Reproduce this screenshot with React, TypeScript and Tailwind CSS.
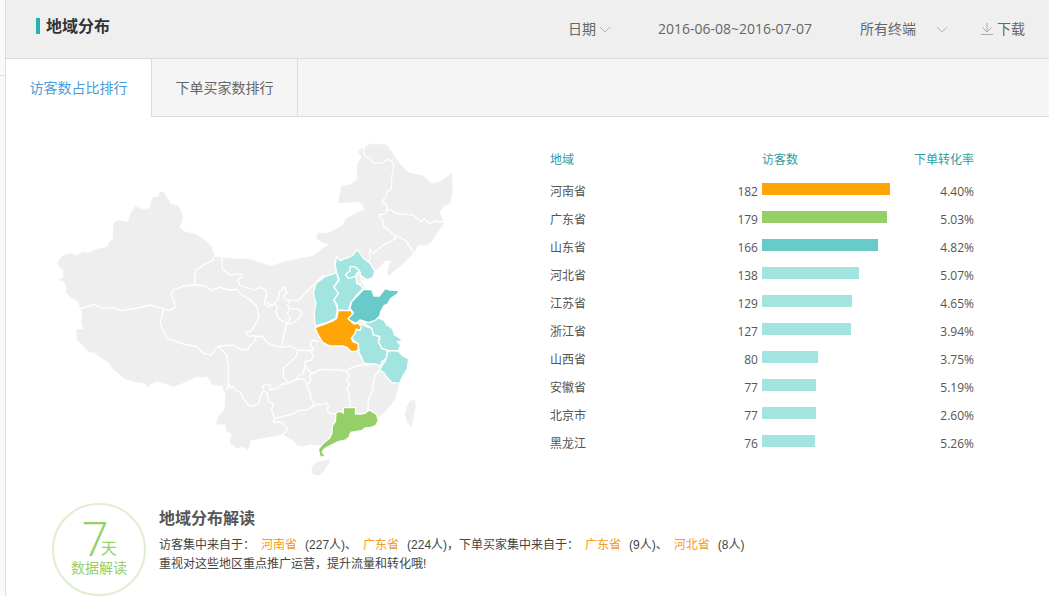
import React from 'react';

interface Region {
  name: string;
  visitors: number;
  rate: string;
  color: string;
}

interface Shape {
  points: string;
  fill: string;
}

const REGIONS: Region[] = [
  { name: '河南省', visitors: 182, rate: '4.40%', color: 'bg-[#ffa508]' },
  { name: '广东省', visitors: 179, rate: '5.03%', color: 'bg-[#94cf68]' },
  { name: '山东省', visitors: 166, rate: '4.82%', color: 'bg-[#68cbca]' },
  { name: '河北省', visitors: 138, rate: '5.07%', color: 'bg-[#a1e4e0]' },
  { name: '江苏省', visitors: 129, rate: '4.65%', color: 'bg-[#a1e4e0]' },
  { name: '浙江省', visitors: 127, rate: '3.94%', color: 'bg-[#a1e4e0]' },
  { name: '山西省', visitors: 80, rate: '3.75%', color: 'bg-[#a1e4e0]' },
  { name: '安徽省', visitors: 77, rate: '5.19%', color: 'bg-[#a1e4e0]' },
  { name: '北京市', visitors: 77, rate: '2.60%', color: 'bg-[#a1e4e0]' },
  { name: '黑龙江', visitors: 76, rate: '5.26%', color: 'bg-[#a1e4e0]' },
];

const MAX_VISITORS = 182;
const MAX_BAR_WIDTH = 128;

const LAND = '#eeeeee';
const TEAL = '#a1e4e0';

const MAINLAND =
  '22,403 30,385 45,374 65,371 80,378 97,367 115,369 140,358 170,352 180,335 190,325 191,278 205,272 235,277 240,255 255,230 278,238 300,236 306,204 325,200 331,186 342,186 348,200 358,212 360,222 385,228 396,248 396,270 388,290 400,304 440,315 470,335 485,352 492,380 520,384 560,387 600,388 630,398 665,410 700,395 740,388 790,378 820,354 840,345 805,330 798,318 805,310 835,310 880,285 890,265 920,250 945,240 935,222 925,215 865,218 875,168 900,165 922,148 922,105 935,80 925,65 945,50 965,42 1010,45 1025,65 1040,90 1075,128 1120,138 1145,163 1180,150 1205,130 1207,180 1200,218 1180,230 1168,245 1180,282 1160,310 1145,335 1130,345 1105,345 1090,370 1060,400 1030,425 1015,437 1012,425 1020,405 1025,390 1005,392 985,415 972,420 972,430 960,445 945,445 935,452 940,465 945,475 965,485 972,500 990,500 1005,480 1043,485 1020,502 1000,525 990,545 978,560 1000,572 1025,595 1037,618 1058,630 1040,635 1050,645 1045,665 1055,678 1072,688 1070,715 1058,735 1048,758 1040,790 1030,815 1005,845 985,860 980,875 965,885 940,895 900,905 898,920 865,935 835,950 805,945 780,942 760,948 740,945 730,930 710,920 695,910 688,916 660,920 620,927 602,930 598,950 592,960 586,954 575,950 560,955 552,945 540,940 545,910 532,905 525,882 500,882 505,860 525,838 527,790 520,780 520,768 485,762 472,738 460,742 440,740 410,754 370,770 345,760 320,755 305,760 293,772 290,760 260,756 225,746 205,730 185,712 180,702 150,680 130,665 118,667 82,630 80,600 100,598 95,575 97,550 85,515 60,500 48,488 50,470 40,452 25,450 40,444 40,420';

// borders of the western, central and southern provinces
const INNER_BORDERS = [
  '74,50 68,62 40,75 15,92 15,135 -20,138 -50,150 -58,162 -48,180 -46,202 -60,212 -85,205 -120,195 -150,202 -205,212 -235,202 -260,205 -290,193 -329,207',
  '15,135 45,138 65,150 90,142 115,150 140,148 150,160 180,180 200,198 207,230 192,260 182,275 168,275 170,285 180,290 190,285 197,290',
  '-80,210 -90,250 -70,295 -20,312 20,320 40,340 65,345 80,322 85,318 95,330 110,345 115,380 115,430 120,440',
  '85,318 130,315 155,330 175,328 178,318 192,308 197,292',
  '95,55 98,88 120,105 155,100 155,112 142,120 150,135 190,150 215,142 230,155 228,172 222,190 235,200 255,190 265,175 268,155 285,140 290,158 280,170 288,180 325,182 345,160 370,135 400,108',
  '222,185 248,195 255,192 262,205 258,215 265,235 280,245 292,250',
  '300,180 292,195 300,205 325,208 335,215 330,232 310,250 290,252 280,290 275,320',
  '300,205 292,220 300,235 298,248',
  '197,290 215,288 235,310 272,322 300,318 325,330 355,332 370,330 360,310 370,300 385,305',
  '325,330 318,350 295,372 280,385 280,410 295,430 315,420 325,408 340,402 345,375 342,365 365,360 370,345 360,333',
  '110,450 115,430 120,445 130,440 138,452 150,455 160,475 175,495 185,498 207,490 212,465 222,452 218,440 232,432 242,438 240,450 262,445 275,432 290,432',
  '222,452 232,460 235,485 250,490 245,510 255,535 275,530 310,522 325,512 350,510 368,500 372,490 360,470 362,460 350,440 352,428 338,416 315,420',
  '255,535 250,548 270,545 290,560 290,575 278,582',
  '368,500 385,492 395,495 410,488 415,498 412,515 425,522 440,520',
  '345,375 358,395 370,400 385,390 400,388 450,390 470,395 480,385 510,375 540,375',
  '370,398 360,405 362,420 358,430 350,432',
  '470,395 478,410 470,425 480,430 472,445 478,465 480,505',
  '575,385 555,405 550,430 548,450 535,480 533,515',
];

// borders in the north east
const NORTHEAST_BORDERS = [
  '345,50 340,65 345,78 360,85 370,100 400,98 415,88 428,95 432,110 425,140 425,175 412,185 408,200 395,215 410,225 412,240 405,252 385,255 398,270 400,290 415,298 425,310 440,318',
  '410,240 425,240 440,250 490,255 515,275 522,265 540,282 555,272 580,277',
  '440,318 465,330 480,350 490,368',
  '440,318 430,330 400,345 375,365 370,370 360,360 358,372 360,385 356,395',
];

const NORTH_CHINA: Shape[] = [
  { fill: TEAL, points: '440,98 405,110 378,130 370,160 378,190 372,220 376,258 410,248 438,235 442,205 432,180 445,160 432,140 445,120' },
  { fill: TEAL, points: '440,98 435,75 440,50 450,62 475,52 490,45 500,28 512,42 520,55 540,70 555,95 547,114 530,119 515,108 505,120 505,130 520,145 500,165 482,190 475,212 442,210 442,195 432,180 445,160 432,140 448,120' },
  { fill: TEAL, points: '480,80 495,80 508,92 502,102 495,110 475,115 467,105 472,98 480,94' },
  { fill: LAND, points: '500,100 510,95 512,108 516,125 510,135 500,130 498,112' },
  { fill: '#68cbca', points: '520,149 545,149 552,168 568,168 585,146 600,150 625,151 624,161 602,176 592,193 582,197 572,216 570,227 557,240 545,245 535,248 510,240 498,250 478,240 472,235 490,218 480,205 485,185 505,165' },
  { fill: '#ffa508', points: '445,212 482,212 488,222 474,236 492,252 505,250 514,260 510,271 498,267 495,280 484,295 490,306 504,310 505,329 498,334 482,334 470,322 458,318 420,318 398,307 385,285 375,263 410,250 430,242 440,235' },
];

const SOUTH_CHINA: Shape[] = [
  { fill: TEAL, points: '378,80 402,91 410,105 427,115 434,135 460,151 442,156 452,165 445,182 415,182 395,175 385,155 390,140 370,135 365,115 340,98 365,95' },
  { fill: TEAL, points: '330,100 345,108 365,115 370,135 388,140 385,155 395,175 412,182 410,205 395,215 392,228 378,222 355,222 340,218 335,202 328,190 325,165 305,145 315,120 332,118' },
  { fill: TEAL, points: '415,182 445,183 457,197 476,207 472,236 460,256 448,280 425,277 410,262 403,250 388,238 405,215 410,200' },
  { fill: '#94cf68', points: '258,368 272,364 280,370 280,353 317,353 316,372 330,372 345,370 358,360 380,373 385,392 377,407 362,412 345,414 335,422 302,427 298,440 288,450 265,455 235,470 222,478 217,486 226,500 210,501 205,477 220,460 238,445 245,432 248,405 256,395' },
];

const ISLANDS = [
  '184,538 190,525 205,515 240,508 238,518 225,535 222,545 205,557 188,552',
  '480,332 496,330 497,350 492,375 485,412 470,395 465,375 470,350',
];

const ChinaMap: React.FC = () => (
  <svg
    viewBox="0 0 1260 1050"
    className="block w-full max-w-[420px]"
    role="img"
    aria-label="访客地域分布地图"
    stroke="#fff"
    strokeWidth="4"
    strokeLinejoin="round"
    strokeLinecap="round"
  >
    <polygon points={MAINLAND} fill={LAND} stroke={LAND} strokeWidth="2" />
    <g fill="none" transform="translate(420 330)">
      {INNER_BORDERS.map((points) => (
        <polyline key={points} points={points} />
      ))}
    </g>
    <g fill="none" transform="translate(600 0)">
      {NORTHEAST_BORDERS.map((points) => (
        <polyline key={points} points={points} />
      ))}
    </g>
    <g transform="translate(600 480)">
      {ISLANDS.map((points) => (
        <polygon key={points} points={points} fill={LAND} stroke="none" />
      ))}
      {SOUTH_CHINA.map((s) => (
        <polygon key={s.points} points={s.points} fill={s.fill} />
      ))}
    </g>
    <g transform="translate(420 330)">
      {NORTH_CHINA.map((s) => (
        <polygon key={s.points} points={s.points} fill={s.fill} />
      ))}
    </g>
  </svg>
);

const Chevron: React.FC = () => (
  <svg viewBox="0 0 12 7" className="pointer-events-none absolute right-0 h-[7px] w-3" fill="none" stroke="#b5b5b5">
    <path d="M1 1l5 5 5-5" />
  </svg>
);

const Header: React.FC = () => (
  <header className="flex h-[59px] items-center justify-between border-b border-[#dcdcdc] bg-[#efefef] pl-[30px] pr-6">
    <h1 className="mb-[6px] flex items-center gap-[6px] text-base font-bold leading-6 text-[#333]">
      <span className="h-4 w-1 bg-[#26b2b5]" />
      地域分布
    </h1>
    <div className="flex items-center text-sm leading-5 text-[#666]">
      <div className="relative flex w-[43px] items-center">
        <select aria-label="日期" className="w-full appearance-none bg-transparent">
          <option>日期</option>
        </select>
        <Chevron />
      </div>
      <button className="ml-[47px] w-[158px] whitespace-nowrap text-left">2016-06-08~2016-07-07</button>
      <div className="relative ml-11 flex w-[88px] items-center">
        <select aria-label="终端" className="w-full appearance-none bg-transparent">
          <option>所有终端</option>
        </select>
        <Chevron />
      </div>
      <button className="ml-[33px] flex items-center gap-1">
        <svg viewBox="0 0 12 12" className="h-3 w-3" fill="none" stroke="#aaa">
          <path d="M6 0v8.500M1.500 4.500L6 9l4.500-4.500M0 11.500h12" />
        </svg>
        下载
      </button>
    </div>
  </header>
);

const Tabs: React.FC = () => (
  <nav role="tablist" className="flex h-[58px] bg-[#f5f5f5] text-sm text-[#666]">
    <button role="tab" aria-selected="true" className="w-[146px] border-r border-[#dcdcdc] bg-white text-[#4a9bdc]">
      访客数占比排行
    </button>
    <button role="tab" aria-selected="false" className="w-[146px] border-b border-r border-[#dcdcdc]">
      下单买家数排行
    </button>
    <div className="flex-1 border-b border-[#dcdcdc]" />
  </nav>
);

const RegionTable: React.FC = () => (
  <table className="w-full table-fixed text-xs text-[#555]">
    <thead>
      <tr className="h-9 text-left text-[#2e9ca0]">
        <th className="w-[40%] font-normal">地域</th>
        <th className="w-[10%]" />
        <th className="w-[32%] font-normal">访客数</th>
        <th className="w-[18%] whitespace-nowrap text-right font-normal">下单转化率</th>
      </tr>
    </thead>
    <tbody>
      {REGIONS.map((r) => (
        <tr key={r.name} className="h-7">
          <td>{r.name}</td>
          <td className="pr-1 text-right">{r.visitors}</td>
          <td className="pb-[6px]">
            <div
              className={`h-3 ${r.color}`}
              style={{ width: Math.floor((r.visitors / MAX_VISITORS) * MAX_BAR_WIDTH) }}
            />
          </td>
          <td className="text-right">{r.rate}</td>
        </tr>
      ))}
    </tbody>
  </table>
);

const Place: React.FC<{ children: React.ReactNode }> = ({ children }) => (
  <span className="ml-[6px] mr-2 text-[#f59a23]">{children}</span>
);

const Insight: React.FC = () => (
  <section className="flex gap-[13px] pl-[46px]">
    <div className="flex h-[93px] w-[94px] shrink-0 flex-col items-center rounded-full border-2 border-[#dff0d0] pt-3 text-sm text-[#94cf68]">
      <div className="flex items-end">
        <span className="font-['Open_Sans'] text-[48px] font-light leading-[41px]">7</span>
        <span className="-ml-2 text-base leading-5">天</span>
      </div>
      <span className="leading-5">数据解读</span>
    </div>
    <div className="pt-[3px] text-xs leading-[19px] text-[#444]">
      <h2 className="mb-[6px] text-base font-bold leading-6 text-[#555]">地域分布解读</h2>
      <div className="font-['Liberation_Sans','Noto_Sans_CJK_SC',sans-serif]">
        <p>
          访客集中来自于：
          <Place>河南省</Place>(227人)、
          <Place>广东省</Place>(224人)，下单买家集中来自于：
          <Place>广东省</Place>(9人)、
          <Place>河北省</Place>(8人)
        </p>
        <p>重视对这些地区重点推广运营，提升流量和转化哦!</p>
      </div>
    </div>
  </section>
);

export default function App() {
  return (
    <div className="flex min-h-screen bg-white font-['Open_Sans','Noto_Sans_CJK_SC',sans-serif]">
      <aside className="w-[6px] shrink-0 border-r border-[#dcdcdc] bg-[#fafafa]">
        <div className="h-[76px] border-b border-[#e2e2e2]" />
      </aside>
      <main className="min-w-0 flex-1">
        <Header />
        <Tabs />
        <div className="grid grid-cols-[544fr_499fr]">
          <div className="pl-11 pt-[13px]">
            <ChinaMap />
          </div>
          <div className="pr-[75px] pt-[25px]">
            <RegionTable />
          </div>
        </div>
        <div className="pt-[23px]">
          <Insight />
        </div>
      </main>
    </div>
  );
}
